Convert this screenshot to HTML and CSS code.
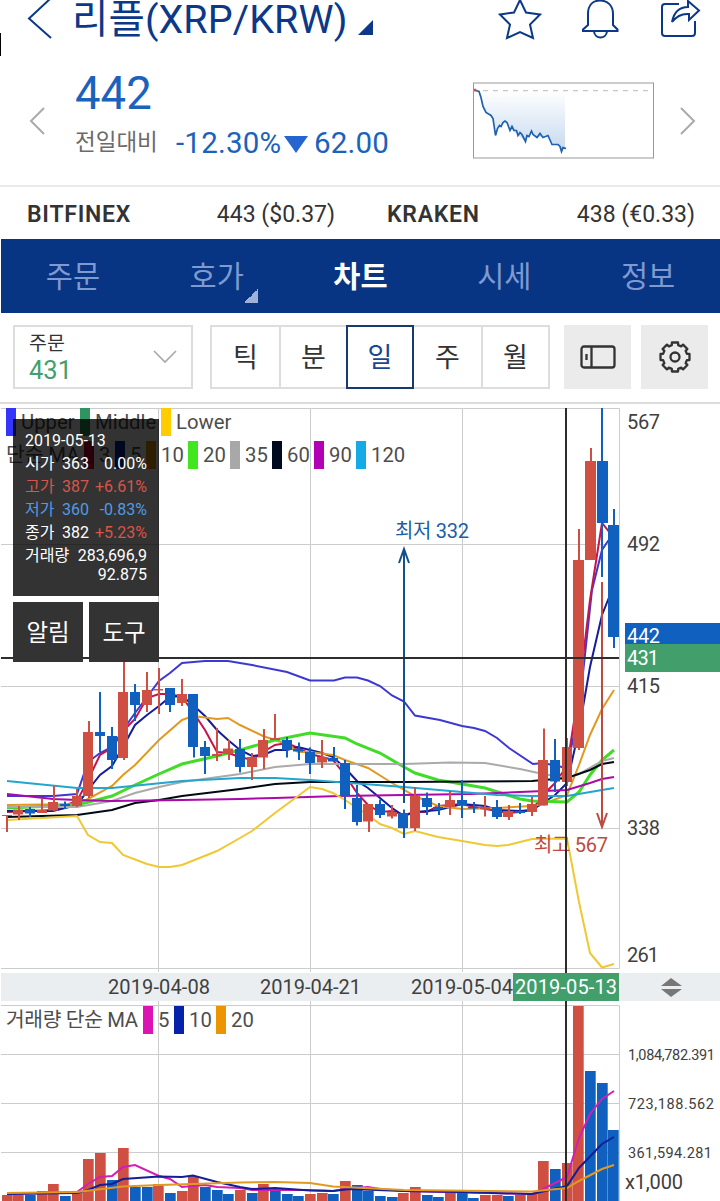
FILE: index.html
```html
<!DOCTYPE html>
<html lang="ko">
<head>
  <meta charset="utf-8">
  <title>리플(XRP/KRW)</title>
  <link rel="stylesheet" href="styles.css">
</head>
<body>
  <header class="header">
    <svg class="back" width="26" height="40" viewBox="0 0 26 40"><path d="M24 -2L2 18.5L24 38"/></svg>
    <h1>리플(XRP/KRW)</h1>
    <svg class="corner" width="15" height="15" viewBox="0 0 15 15"><path d="M15 0V15H0Z"/></svg>
    <div class="header-icons">
      <svg width="44" height="42" viewBox="0 0 44 42"><path d="M22 0L28 12.5L42 14.5L32 24.5L35 38L22 32L9 38L12 24.5L2 14.5L16 12.5Z"/></svg>
      <svg width="44" height="42" viewBox="0 0 44 42"><path d="M10 25V14C10 5 15 .5 22 .5S35 5 35 14V25L39.500 29.500V31H5V29.500ZM16 31.500C17 39.500 28 39.500 29 31.500"/></svg>
      <svg width="44" height="42" viewBox="0 0 44 42"><path d="M21 4H7Q4 4 4 7V33Q4 36 7 36H34Q37 36 37 33V21M14 22Q17 7 30 7V1L41 10.500L31 20V14Q21 13 14 22Z"/></svg>
    </div>
  </header>

  <section class="summary">
    <svg class="arrow" width="17" height="30" viewBox="0 0 17 30"><path d="M15 2L2 15L15 28"/></svg>
    <div class="price">
      <div class="now">442</div>
      <div class="change">
        <span class="label">전일대비</span>
        <span class="rate">-12.30%</span>
        <i class="down"></i>
        <span class="diff">62.00</span>
      </div>
    </div>
    <svg class="mini" width="182" height="77" viewBox="473 82.500 182 77">
      <defs>
        <linearGradient id="fade" x1="0" y1="0" x2="0" y2="1">
          <stop offset="0" stop-color="#fff"/>
          <stop offset="1" stop-color="#c5d9ee"/>
        </linearGradient>
      </defs>
      <path fill="url(#fade)" d="M474 91L480 93L484 109L487 113L492 118L495.500 136L499 126L505 122L511 130L519 136L525 142L531 132L538 138L547 136L552 145L559 146L562 152L565 148V91Z"/>
      <path class="base" d="M483 91.200H651"/>
      <path class="trend" d="M474 90.500L479 92L481 98L483 107L486 113L491 116L493 119L495.500 136L497.500 129L499.500 126L501 127L503 123L505 121.500L507 123L510 131L512 127L514 131L516.500 131L518 136L520 133L522 135L525.500 142L527 136L529 137L531.500 131.500L533 135L537 138L540 134L543 138L548 136L552 145L558 145L560 147L561.500 152L563 148L566 149"/>
      <circle cx="475" cy="90.500" r="1.500" fill="#d24f45"/>
      <rect class="frame" x="473.500" y="83.500" width="180" height="75"/>
    </svg>
    <svg class="arrow" width="17" height="30" viewBox="0 0 17 30"><path d="M2 2L15 15L2 28"/></svg>
  </section>

  <section class="exchanges">
    <div><b>BITFINEX</b><span>443 ($0.37)</span></div>
    <div><b>KRAKEN</b><span>438 (€0.33)</span></div>
  </section>

  <nav class="tabs">
    <a>주문</a>
    <a class="more">호가</a>
    <a class="active">차트</a>
    <a>시세</a>
    <a>정보</a>
  </nav>

  <section class="toolbar">
    <div class="order">
      <div>
        <div class="order-label">주문</div>
        <div class="order-price">431</div>
      </div>
      <svg width="24" height="14" viewBox="0 0 24 14"><path d="M1 1L12 12L23 1"/></svg>
    </div>
    <div class="period">
      <span>틱</span><span>분</span><span class="active">일</span><span>주</span><span>월</span>
    </div>
    <div class="tool">
      <svg width="36" height="24" viewBox="0 0 36 24"><rect x="1.500" y="1.500" width="33" height="21" rx="2.500"/><path d="M11.500 1.500V22.500M6.500 9V15"/></svg>
    </div>
    <div class="tool">
      <svg width="34" height="34" viewBox="-17 -17 34 34"><path id="gear"/><circle r="4.500"/></svg>
    </div>
  </section>

  <main class="chart">
    <svg id="chart" width="720" height="797" viewBox="0 404 720 797"></svg>

    <div class="legend bands">
      <span style="width:59px"><i style="background:#3434fa"></i>Upper</span>
      <span style="width:66px"><i style="background:#2f9461"></i>Middle</span>
      <span><i style="background:#fc0"></i>Lower</span>
    </div>
    <div class="legend averages">
      <span class="name">단순 MA</span>
      <span class="short"><i style="background:#c8003c"></i>3</span>
      <span class="short"><i style="background:#0a23a0"></i>5</span>
      <span><i style="background:#e69500"></i>10</span>
      <span><i style="background:#40e61e"></i>20</span>
      <span><i style="background:#a8a8a8"></i>35</span>
      <span><i style="background:#000a1e"></i>60</span>
      <span><i style="background:#b400b4"></i>90</span>
      <span><i style="background:#14aae6"></i>120</span>
    </div>
    <div class="legend volumes">
      <span class="name">거래량 단순 MA</span>
      <span class="short"><i style="background:#dc14b4"></i>5</span>
      <span><i style="background:#0523aa"></i>10</span>
      <span><i style="background:#eb9600"></i>20</span>
    </div>

    <div class="panel">
      <div class="info">
        <div>2019-05-13</div>
        <div class="row"><span>시가</span><span>363</span><span>0.00%</span></div>
        <div class="row up"><span>고가</span><span>387</span><span>+6.61%</span></div>
        <div class="row low"><span>저가</span><span>360</span><span>-0.83%</span></div>
        <div class="row"><span>종가</span><span>382</span><span class="up">+5.23%</span></div>
        <div class="amount"><span>거래량</span><span>283,696,9<br>92.875</span></div>
      </div>
      <div class="buttons"><span>알림</span><span>도구</span></div>
    </div>
  </main>
  <script src="chart.js"></script>
</body>
</html>
```
FILE: styles.css
```css
* {
  box-sizing: border-box;
}
body {
  margin: 0;
  width: 720px;
  height: 1201px;
  overflow: hidden;
  background: #fff;
  color: #333;
  font-family: Roboto, "Noto Sans CJK KR", sans-serif;
}
svg {
  display: block;
  fill: none;
  flex: none;
}
.header {
  position: relative;
  display: flex;
  height: 57px;
  padding-left: 27px;
  color: #0b3987;
}
.header::before {
  content: "";
  position: absolute;
  left: 0;
  top: 33px;
  width: 1px;
  height: 23px;
  background: #000;
}
.header svg {
  stroke: #0b3987;
  stroke-width: 2;
}
.header h1 {
  width: 277px;
  margin: 0 0 0 19px;
  font-size: 39.5px;
  line-height: 40px;
  font-weight: 400;
  letter-spacing: .1px;
  white-space: nowrap;
}
.header .corner {
  margin: 20px 0 0 9px;
  fill: #0b3987;
  stroke: none;
}
.header-icons {
  display: flex;
  gap: 36px;
  margin: 0 18px 0 auto;
}
.summary {
  display: flex;
  height: 128px;
  padding: 0 25px 0 29px;
}
.arrow {
  margin-top: 49px;
  stroke: #aaa;
  stroke-width: 2;
}
.price {
  flex: none;
  width: 428px;
  padding: 10px 0 0 29px;
  color: #1a62bb;
}
.now {
  font-size: 45.5px;
  line-height: 54px;
}
.change {
  display: flex;
  align-items: center;
  height: 44px;
  font-size: 29.5px;
}
.change .label {
  width: 101px;
  font-size: 22.5px;
  line-height: 30px;
  padding-bottom: 2px;
  color: #6b6b6b;
}
.rate {
  width: 108px;
  letter-spacing: .2px;
  white-space: nowrap;
}
.down {
  margin: 2px 6px 0 0;
  border: solid transparent;
  border-width: 17px 12px 0;
  border-top-color: #2565cf;
}
.diff {
  letter-spacing: .2px;
}
.mini {
  margin: 25px 24px 0 -1px;
}
.mini .frame {
  stroke: #999;
}
.mini .base {
  stroke: #bbb;
  stroke-dasharray: 5 5;
}
.mini .trend {
  stroke: #1e61ae;
  stroke-width: 1.7;
}
.exchanges {
  display: flex;
  height: 54px;
  border-top: 2px solid #ebebeb;
  font-size: 23px;
  line-height: 55px;
}
.exchanges div {
  display: flex;
  justify-content: space-between;
  width: 360px;
  padding: 0 25px 0 27px;
}
.exchanges b {
  font-weight: 600;
  letter-spacing: .75px;
}
.tabs {
  display: flex;
  height: 74px;
  margin-left: 1px;
  background: #073583;
  color: #7e9ad0;
  font-size: 29.5px;
  line-height: 77px;
  text-align: center;
}
.tabs a {
  flex: 1;
}
.tabs .active {
  color: #fff;
  font-weight: 700;
}
.tabs .more {
  position: relative;
}
.more::after {
  content: "";
  position: absolute;
  right: 31px;
  bottom: 10px;
  width: 14px;
  height: 14px;
  background: linear-gradient(135deg, transparent 50%, #9db1d9 50%);
}
.toolbar {
  display: flex;
  height: 91px;
  padding: 12px 12px 0 13px;
  border-bottom: 2px solid #ddd;
}
.order {
  display: flex;
  justify-content: space-between;
  width: 180px;
  height: 64px;
  padding: 3px 14px 0;
  border: 2px solid #ddd;
}
.order svg {
  margin-top: 20px;
  stroke: #aaa;
  stroke-width: 1.7;
}
.order-label {
  font-size: 19.5px;
  line-height: 27px;
}
.order-price {
  font-size: 25.5px;
  line-height: 27px;
  color: #429f6c;
}
.period {
  display: flex;
  width: 340px;
  height: 64px;
  margin: 0 14px 0 17px;
  border: 2px solid #ddd;
  font-size: 27px;
  line-height: 62px;
  text-align: center;
}
.period span {
  width: 67px;
  border-left: 2px solid #ddd;
}
.period span:first-child {
  border-left: 0;
}
.period .active {
  width: 68px;
  margin: -2px 0;
  border: 2px solid #173a75;
  color: #1a478f;
}
.period .active + span {
  border-left: 0;
}
.tool {
  display: flex;
  align-items: center;
  justify-content: center;
  width: 67px;
  height: 64px;
  margin-right: 10px;
  background: #ebebeb;
}
.tool svg {
  stroke: #333;
  stroke-width: 2.3;
  stroke-linejoin: round;
}
.tool:last-child {
  margin-right: 0;
}
.chart {
  position: relative;
}
.grid {
  stroke: #ccc;
}
.axis {
  font-size: 20px;
  fill: #404040;
}
.axis.small {
  font-size: 14.5px;
}
.axis.white {
  fill: #fff;
}
.lines path {
  stroke-width: 2;
}
.legend {
  position: absolute;
  left: 6px;
  display: flex;
  height: 28px;
  font-size: 20.3px;
  line-height: 28px;
  color: #4d4d4d;
  white-space: nowrap;
}
.legend span {
  display: flex;
  width: 42px;
}
.legend i {
  flex: none;
  width: 10px;
  margin-right: 5px;
}
.legend .short {
  width: 31px;
}
.bands {
  top: 4px;
}
.bands span {
  margin-right: 15px;
}
.averages {
  top: 37px;
}
.legend.averages .name {
  width: 78px;
}
.volumes {
  top: 602px;
}
.legend.volumes .name {
  width: 137px;
  letter-spacing: -.3px;
}
.panel {
  position: absolute;
  left: 13px;
  top: 15px;
  width: 146px;
  color: #fff;
}
.info {
  height: 177px;
  padding: 10px 12px;
  background: rgba(0, 0, 0, .8);
  font-size: 16px;
  line-height: 23px;
}
.row {
  display: grid;
  grid-template-columns: 37px 27px 1fr;
  height: 23px;
}
.row span:last-child {
  text-align: right;
}
.up {
  color: #d8554a;
}
.low {
  color: #509be6;
}
.amount {
  display: flex;
  justify-content: space-between;
  text-align: right;
}
.amount span:last-child {
  line-height: 19px;
  padding-top: 2px;
}
.buttons {
  display: flex;
  gap: 6px;
  margin-top: 6px;
}
.buttons span {
  flex: 1;
  height: 60px;
  background: #333;
  font-size: 23.5px;
  line-height: 62px;
  text-align: center;
}
```
FILE: chart.js
```js
var RED = "#cf5043", BLUE = "#1060c0";
var STEP = 11.67, FIRST = 7;

// color, body top, body bottom, high, low
var candles = [
  ["r",815,816,815,832],["r",809.500,814.500,806,820],["b",809,813.500,807,817],["r",810,813,798,813],
  ["r",802,810.500,786,811],["b",804,806,801.500,809],["r",796,806,789,807],["r",732,796,721,798],
  ["b",732,736,692,752],["b",736,760,727,769],["r",692,758,660,760],["b",692,705,684,721],
  ["r",690,705,672,712],["r",689,690.500,668,714],["b",688,705,688,712],["r",694,703,679,706],
  ["b",694,747,694,757.500],["b",747,756,741,774],["r",754,756,728,761],["r",748.500,754,740,760],
  ["b",749,767,739,772.500],["r",757,767,753,780],["r",740,757.500,729,769],["r",738,740,714,740],
  ["b",740,750,737,757.500],["b",749,751.500,742.500,760],["b",752,763,747.500,774],["r",757,762.500,740,768],
  ["b",758,761.500,747,762],["b",763,796,760,809],["b",798,822,785,825.500],["r",804,821.500,804,832],
  ["b",804,815,799.500,818],["r",812,816.500,805,818.500],["b",813,828,809.500,838],["r",796,828,787,831],
  ["b",798,807,792.500,815],["b",807,809,803,815],["r",800,807,791,815],["b",800,805.500,780,818],
  ["b",807,808.500,802,813],["r",807,809,796,816.500],["b",807,817,800,819],["r",811,817,805,820],
  ["b",811,813,803,814],["r",804,812,797,816],["r",760,805.500,728.500,805.500],["b",760,781.500,739,792],
  ["r",747,782,738,786],["r",560,748,529,750],["r",461,560,448,560],["b",461,523,408,577],
  ["b",525,637,509,648]
];

var volumes = [
  "r1195","r1195","b1195","r1191","r1184","b1196","r1192","r1159","r1153","b1180","r1148","b1187","b1187",
  "r1184","b1193","r1191","r1176","b1187","b1190","b1194","r1190","b1193","r1184","b1190","b1194","b1196",
  "r1194","r1193","b1194","r1181","b1185","b1191","b1196","b1197","r1193","r1187","b1195","b1197","r1193",
  "b1192","b1198","r1195","r1195","b1196","r1195","r1193","r1161","b1169","r1163","r1006","b1071","b1083","b1130"
];

var lines = [
  ["#3e38d2", "7,796 53,796 77,794 88,762 100,753 112,747 123,730 135,713 147,697 159,681 170,673 182,663 205,661 228,661 252,665 287,672 310,680.500 334,680.500 345,677.500 357,677.500 368,680.500 380,686 392,695.500 404,701.500 415,715.500 440,720 462,726 474,728 485,731 497,738 509,748 533,764 543,763 567,768 579,710 592,590 602,550 608,541 614,534"],
  ["#c8144b", "7,812 53,810 77,801 88,780 100,755 112,748 123,731 135,719 147,698 159,694 170,694 182,697 193,712 205,730 217,752 228,753 240,757 252,760 263,752 275,745 287,743 298,748 310,754 322,757 333,760 345,775 357,793 368,805 380,812 392,811 404,815 415,812 427,812 438,806 450,805 462,804 474,807 497,811 508,813 520,812 532,810 543,795 555,783 567,766 579,690 590,600 602,523 614,538"],
  ["#141e96", "7,811 53,811 77,805 88,790 100,775 112,766 123,747 135,725 147,715 159,706 170,697 182,696 193,705 205,716 217,730 228,740 240,750 252,756 263,755 275,750 287,750 298,747 310,750 322,753 333,757 345,768 357,781 368,788 380,798 392,808 404,816 415,812 427,811 438,810 462,804 485,806 497,810 520,811 532,810 543,803 555,795 567,783 579,730 590,667 602,615 614,585"],
  ["#e09a20", "7,805 77,804 88,799 112,786 123,775 135,765 159,740 182,720 193,716 217,719 228,718 240,725 263,736 287,744 298,752 310,752 333,755 345,760 368,768 392,783 415,796 438,806 462,809 497,808 532,806 543,804 567,795 579,765 590,735 602,709 614,690"],
  ["#41dc28", "7,808 77,805 112,796 135,785 159,774 182,764 217,756 240,750 275,740 310,733 345,738 357,744 380,753 404,767 415,773 438,780 462,784 485,788 520,799 532,801 567,802 579,792 590,775 602,760 614,750", 3],
  ["#aaa", "7,807 77,807 112,801 135,793 159,787 182,782 240,774 275,767 310,764 404,764 450,762.500 485,763 520,769 543,774 567,778 579,774 602,761 614,758"],
  ["#000a14", "7,817 77,815 112,810 135,803 159,800 182,796 240,789 275,784 310,782 404,782 532,781 567,778 590,770 602,764 614,762"],
  ["#aa0aaa", "7,794 53,799 77,800 112,801 182,800 240,799 275,798 340,796 404,795 470,794 520,792 567,790 590,783 602,779 614,777"],
  ["#23a5cd", "7,781 77,788 112,788 182,781 240,778 275,778 310,780 404,787 462,792 497,795 532,796 567,796 602,790 614,788"],
  ["#f0c832", "7,820 77,816 88,835 100,842 112,843 123,855 147,864 159,867 170,867 182,865 217,851 240,838 252,831 275,813 298,796 310,787 322,789 333,793 345,800 368,815 380,824 392,828 404,834 415,831 438,837 462,841 485,845 497,846 508,845 532,839 567,838.500 579,902 590,953 602,967.500 614,964"]
];

var volumeLines = [
  ["#d21eb4", "7,1194 77,1192 88,1184 100,1177 112,1176 123,1167 135,1165 159,1176 170,1179 182,1187 205,1185 217,1187 240,1188 252,1190 310,1190 333,1191 345,1189 368,1187 380,1189 404,1191 532,1194 543,1189 567,1177 579,1138 590,1114 602,1099 614,1091"],
  ["#141e96", "7,1194 77,1193 88,1190 100,1185 112,1184 123,1179 159,1176.500 182,1177 193,1175.500 217,1182 240,1187 252,1189 275,1188 310,1190.500 333,1191 350,1189 404,1191 460,1192 532,1194 567,1186 579,1168 602,1144 614,1137"],
  ["#e09a20", "7,1193 77,1192 123,1186.500 159,1185 193,1184 240,1182.500 275,1182 310,1183 333,1186.500 404,1190 532,1191.500 567,1188 579,1181 602,1169 614,1165"]
];

function rect(x, y, w, h, fill) {
  return '<rect x="' + x + '" y="' + y + '" width="' + w + '" height="' + h + '" fill="' + fill + '"/>';
}
function text(x, y, str, cls, len) {
  return '<text x="' + x + '" y="' + y + '" class="axis ' + (cls || "") + '"' +
    (len ? ' textLength="' + len + '"' : "") + ">" + str + "</text>";
}
function drawLines(list) {
  return '<g class="lines">' + list.map(function (l) {
    return '<path stroke="' + l[0] + '" d="M' + l[1].replace(/ /g, "L") + '"' +
      (l[2] ? ' style="stroke-width:' + l[2] + '"' : "") + "/>";
  }).join("") + "</g>";
}

var out = "";

// grid
out += '<path class="grid" d="M1 408.500H619.500V968.500H1M1 544.500H619M1 686.500H619M1 828.500H619M158.500 408V972M310.500 408V972M462.500 408V972"/>';
out += '<path class="grid" d="M1 1005.500H619.500V1201M1 1054.500H619M1 1103.500H619M1 1152.500H619M158.500 1001V1201M310.500 1001V1201M462.500 1001V1201"/>';

// averages and bands, then candles
out += drawLines(lines);
candles.forEach(function (c, i) {
  var x = FIRST + STEP * i, color = c[0] === "r" ? RED : BLUE;
  var left = Math.max(1, Math.round(x - 5.500));
  out += rect(Math.round(x) - 1, c[3], 2, c[4] - c[3], color);
  out += rect(left, c[1], Math.min(i < 49 ? 10 : 11, 620 - left), c[2] - c[1], color);
});
out += '<path stroke="#14508c" stroke-width="2" d="M404 803V549M399 563L404 549L409 563"/>';
out += '<path stroke="#be4b41" stroke-width="2" d="M602 582V827M597 813L602 827L607 813"/>';
out += '<text x="395" y="538" font-size="20" fill="#1c5fa5" textLength="74">최저 332</text>';
out += '<text x="534" y="852" font-size="20" fill="#be4b41" textLength="74">최고 567</text>';

// volume
volumes.forEach(function (v, i) {
  var left = Math.max(1, Math.round(FIRST + STEP * i - 5.500)), top = +v.slice(1);
  out += rect(left, top, 10.700, 1201 - top, v[0] === "r" ? RED : BLUE);
});
out += drawLines(volumeLines);

// crosshair
out += rect(1, 657, 618, 2, "#2d2d2d") + rect(565, 408, 2, 793, "#2d2d2d");

// price labels
out += rect(625, 623, 95, 21, "#1060c0") + rect(625, 644, 95, 28, "#429f6c");
out += text(627, 429, "567", "", 33) + text(627, 551, "492", "", 33) + text(627, 693, "415", "", 33);
out += text(627, 835, "338", "", 33) + text(627, 962, "261", "", 32);
out += text(627, 643, "442", "white", 33) + text(627, 665, "431", "white", 32);

// dates
out += rect(1, 973, 719, 28, "#ebeef0");
out += text(108, 994, "2019-04-08", "", 102) + text(260, 994, "2019-04-21", "", 101) + text(411, 994, "2019-05-04", "", 102);
out += rect(513, 973, 106, 28, "#429f6c") + text(515, 994, "2019-05-13", "white", 102);
out += '<path fill="#777" d="M661 986L671 978L682 986ZM661 989H682L671 997Z"/>';

// volume labels
out += text(628, 1060, "1,084,782.391", "small", 87) + text(628, 1109, "723,188.562", "small", 86);
out += text(628, 1158, "361,594.281", "small", 84) + text(625, 1189, "x1,000", "", 58);

document.getElementById("chart").innerHTML = out;

// settings icon: eight teeth
var d = "";
for (var k = 0; k < 8; k++) {
  [[-12, 14.800], [12, 14.800], [15, 12.300], [30, 12.300]].forEach(function (p) {
    var a = (k * 45 + p[0]) * Math.PI / 180;
    d += (d ? "L" : "M") + (Math.sin(a) * p[1]).toFixed(2) + " " + (-Math.cos(a) * p[1]).toFixed(2);
  });
}
document.getElementById("gear").setAttribute("d", d + "Z");
```
